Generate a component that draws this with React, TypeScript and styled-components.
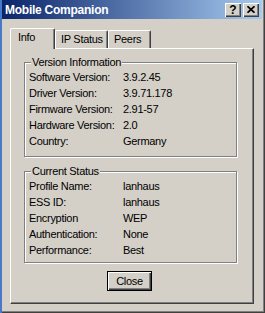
import React, { useState } from 'react';
import styled, { createGlobalStyle } from 'styled-components';

const GlobalStyle = createGlobalStyle`
    html, body {
        margin: 0;
        padding: 0;
        background: #d4d0c8;
    }
    body {
        font-family: "Liberation Sans", Arial, sans-serif;
        font-size: 11px;
        color: #000;
    }
`;

interface InfoRow {
    label: string;
    value: string;
}

const versionRows: InfoRow[] = [
    { label: 'Software Version:', value: '3.9.2.45' },
    { label: 'Driver Version:', value: '3.9.71.178' },
    { label: 'Firmware Version:', value: '2.91-57' },
    { label: 'Hardware Version:', value: '2.0' },
    { label: 'Country:', value: 'Germany' },
];

const statusRows: InfoRow[] = [
    { label: 'Profile Name:', value: 'lanhaus' },
    { label: 'ESS ID:', value: 'lanhaus' },
    { label: 'Encryption', value: 'WEP' },
    { label: 'Authentication:', value: 'None' },
    { label: 'Performance:', value: 'Best' },
];

const tabs = ['Info', 'IP Status', 'Peers'];
const tabWidths = [45, 53, 43];

const GroupBox: React.FC<{ title: string; rows: InfoRow[]; first?: boolean }> = ({ title, rows, first }) => (
    <Group $first={first}>
        <Legend>{title}</Legend>
        {rows.map((row) => (
            <Row key={row.label}>
                <span>{row.label}</span>
                <span>{row.value}</span>
            </Row>
        ))}
    </Group>
);

const App: React.FC = () => {
    const [activeTab, setActiveTab] = useState(0);

    return (
        <>
            <GlobalStyle />
            <Window>
                <TitleBar>
                    <Title>Mobile Companion</Title>
                    <CaptionButton>
                        <HelpGlyph>?</HelpGlyph>
                    </CaptionButton>
                    <CaptionButton $gap>
                        <svg width="8" height="7" viewBox="0 0 8 7">
                            <path d="M0.5 0.2 L7.5 6.8 M7.5 0.2 L0.5 6.8" stroke="#000" strokeWidth="1.7" fill="none" />
                        </svg>
                    </CaptionButton>
                </TitleBar>
                <Body>
                    <TabStrip>
                        {tabs.map((tab, i) => (
                            <Tab
                                key={tab}
                                $active={i === activeTab}
                                $width={tabWidths[i]}
                                onClick={() => setActiveTab(i)}
                            >
                                {tab}
                            </Tab>
                        ))}
                    </TabStrip>
                    <Panel>
                        <GroupBox title="Version Information" rows={versionRows} first />
                        <GroupBox title="Current Status" rows={statusRows} />
                        <ButtonRow>
                            <CloseButton>Close</CloseButton>
                        </ButtonRow>
                    </Panel>
                </Body>
            </Window>
        </>
    );
};

const Window = styled.div`
    box-sizing: border-box;
    width: 265px;
    height: 313px;
    display: flex;
    flex-direction: column;
    background: #d4d0c8;
    border-left: 2px solid #4a78c8;
    padding: 0 3px 2px 0;
    box-shadow: inset -1px -1px 0 #404040, inset -2px -2px 0 #808080;
`;

const TitleBar = styled.div`
    height: 19px;
    display: flex;
    align-items: center;
    padding: 0 3px 0 3px;
    background: linear-gradient(to right, #0a246a, #a6caf0);
`;

const Title = styled.div`
    flex: 1;
    color: #fff;
    font-weight: bold;
    font-size: 12px;
    letter-spacing: -0.25px;
    white-space: nowrap;
`;

const CaptionButton = styled.div<{ $gap?: boolean }>`
    box-sizing: border-box;
    width: 16px;
    height: 14px;
    margin-left: ${(p) => (p.$gap ? '2px' : '0')};
    display: flex;
    align-items: center;
    justify-content: center;
    background: #d4d0c8;
    box-shadow: inset 1px 1px 0 #fff, inset -1px -1px 0 #404040, inset -2px -2px 0 #808080;
`;

const HelpGlyph = styled.span`
    font-weight: bold;
    font-size: 12px;
    line-height: 12px;
    margin-top: 1px;
`;

const Body = styled.div`
    flex: 1;
    display: flex;
    flex-direction: column;
    padding: 9px 8px 7px 8px;
`;

const TabStrip = styled.div`
    display: flex;
    align-items: flex-end;
    height: 20px;
    position: relative;
    z-index: 1;
`;

const Tab = styled.div<{ $active?: boolean; $width: number }>`
    box-sizing: border-box;
    width: ${(p) => p.$width}px;
    height: ${(p) => (p.$active ? 21 : 18)}px;
    margin-bottom: ${(p) => (p.$active ? -1 : 0)}px;
    padding: 2px 0 0 ${(p) => (p.$active ? 7 : 5)}px;
    line-height: 13px;
    letter-spacing: -0.3px;
    background: #d4d0c8;
    border-top: 1px solid #fff;
    border-left: 1px solid #fff;
    border-right: 1px solid #404040;
    border-radius: 2px 2px 0 0;
    box-shadow: inset -1px 0 0 #808080;
    cursor: default;
    white-space: nowrap;
`;

const Panel = styled.div`
    flex: 1;
    display: flex;
    flex-direction: column;
    padding: 0 16px 0 13px;
    border-top: 1px solid #fff;
    border-left: 1px solid #fff;
    border-right: 1px solid #404040;
    border-bottom: 1px solid #404040;
    box-shadow: inset -1px -1px 0 #808080;
`;

const Group = styled.div<{ $first?: boolean }>`
    position: relative;
    margin-top: ${(p) => (p.$first ? 13 : 14)}px;
    padding: 6px 0 ${(p) => (p.$first ? 7 : 4)}px 4px;
    border: 1px solid #808080;
    box-shadow: inset 1px 1px 0 #fff, 1px 1px 0 #fff;
`;

const Legend = styled.span`
    position: absolute;
    top: -7px;
    left: 6px;
    padding: 0 1px;
    line-height: 13px;
    letter-spacing: -0.3px;
    background: #d4d0c8;
`;

const Row = styled.div`
    display: grid;
    grid-template-columns: 94px 1fr;
    height: 16px;
    line-height: 16px;
    letter-spacing: -0.3px;
    white-space: nowrap;
`;

const ButtonRow = styled.div`
    display: flex;
    justify-content: center;
    margin-top: 8px;
    padding-right: 2px;
`;

const CloseButton = styled.button`
    box-sizing: border-box;
    width: 45px;
    height: 20px;
    padding: 0;
    font-family: "Liberation Sans", Arial, sans-serif;
    font-size: 11px;
    letter-spacing: -0.3px;
    color: #000;
    background: #d4d0c8;
    border: 1px solid #000;
    border-radius: 0;
    box-shadow: inset 1px 1px 0 #fff, inset -1px -1px 0 #404040, inset -2px -2px 0 #808080;
`;

export default App;
